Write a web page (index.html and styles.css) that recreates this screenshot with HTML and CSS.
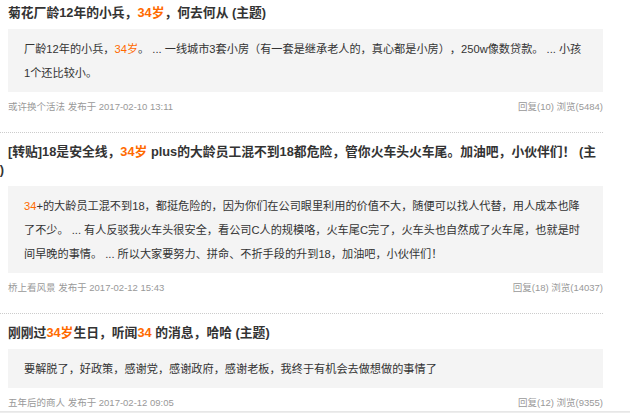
FILE: index.html
```html
<!DOCTYPE html>
<html lang="zh-CN">
<head>
  <meta charset="UTF-8" />
  <meta name="viewport" content="width=device-width, initial-scale=1.0"/>
  <title>搜索结果 - 34岁</title>
  <link rel="stylesheet" href="styles.css">
</head>
<body>

<div class="list">
  <div class="post">
    <h3 class="post-title">菊花厂龄12年的小兵，<em>34岁</em>，何去何从 (主题)</h3>
    <div class="post-body">
      厂龄12年的小兵，<em>34岁</em>。 ... 一线城市3套小房（有一套是继承老人的，真心都是小房），250w像数贷款。 ... 小孩1个还比较小。
    </div>
    <div class="post-meta">
      <span>或许换个活法 发布于 2017-02-10 13:11</span>
      <span>回复(10) 浏览(5484)</span>
    </div>
  </div>

  <div class="post">
    <h3 class="post-title">[转贴]18是安全线，<em>34岁</em> plus的大龄员工混不到18都危险，管你火车头火车尾。加油吧，小伙伴们！ (主题)</h3>
    <div class="post-body">
      <em>34</em>+的大龄员工混不到18，都挺危险的，因为你们在公司眼里利用的价值不大，随便可以找人代替，用人成本也降了不少。 ... 有人反驳我火车头很安全，看公司C人的规模咯，火车尾C完了，火车头也自然成了火车尾，也就是时间早晚的事情。 ... 所以大家要努力、拼命、不折手段的升到18，加油吧，小伙伴们！
    </div>
    <div class="post-meta">
      <span>桥上看风景 发布于 2017-02-12 15:43</span>
      <span>回复(18) 浏览(14037)</span>
    </div>
  </div>

  <div class="post">
    <h3 class="post-title">刚刚过<em>34岁</em>生日，听闻<em>34</em> 的消息，哈哈 (主题)</h3>
    <div class="post-body">
      要解脱了，好政策，感谢党，感谢政府，感谢老板，我终于有机会去做想做的事情了
    </div>
    <div class="post-meta">
      <span>五年后的商人 发布于 2017-02-12 09:05</span>
      <span>回复(12) 浏览(9355)</span>
    </div>
  </div>
</div>

<div class="page-edge"></div>

</body>
</html>
```

FILE: styles.css
```css
body {
  margin: 0;
  padding: 0;
  background: #fff;
  font-family: 'Liberation Sans', 'Noto Sans CJK SC', sans-serif;
  color: #333;
  text-spacing-trim: space-all;
  overflow: hidden;
}

/* the shot is cropped a little on the left, so the list starts off-screen */
.list {
  width: 616px;
  margin-left: -13px;
}

.post {
  padding: 10px 0 17px 0;
  border-bottom: 1px dotted #ccc;
}

.post:first-child {
  padding-top: 4px;
}

.post:last-child {
  border-bottom: none;
  padding-bottom: 0;
}

.post em {
  font-style: normal;
  color: #ff6a00;
}

.post-title {
  margin: 0 0 7px 0;
  font-size: 12.8px;
  line-height: 18px;
  font-weight: bold;
  text-indent: 21px;
  color: #333;
}

.post-body {
  margin-left: 21px;
  padding: 8px 18px 7px 16px;
  background: #f4f4f4;
  font-size: 11.17px;
  line-height: 24px;
  color: #333;
}

.post-meta {
  margin: 7px 0 0 21px;
  display: flex;
  justify-content: space-between;
  font-size: 9.5px;
  line-height: 16px;
  color: #999;
}

.page-edge {
  height: 3px;
  background: linear-gradient(#e4e4e4, #f6f6f6);
}
```
